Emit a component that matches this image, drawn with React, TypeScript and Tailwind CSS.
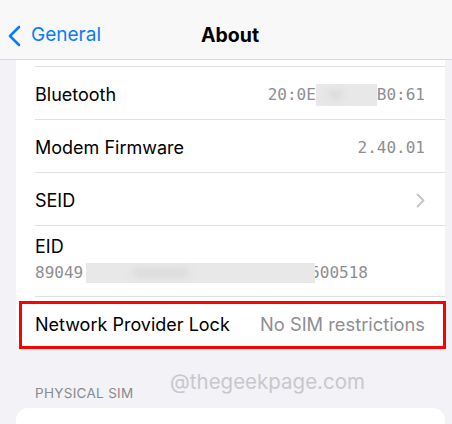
const sans = "font-['Inter','Liberation_Sans',sans-serif]";
const mono = "font-['DejaVu_Sans_Mono','Liberation_Mono',monospace]";

function Row({ label, children }: { label: string; children?: React.ReactNode }) {
  return (
    <div className="flex h-[52px] items-center justify-between pr-5 pt-[3px]">
      <span className="text-[18px] text-black">{label}</span>
      {children}
    </div>
  );
}

function Blur({ className }: { className: string }) {
  return (
    <span className={`relative inline-block overflow-hidden bg-[#e8e8e8] ${className}`}>
      <span className="absolute left-[20%] top-[25%] h-1/2 w-1/4 rounded-full bg-[#dcdcdc] blur-[3px]" />
    </span>
  );
}

export default function App() {
  return (
    <div className={`relative h-[424px] w-[452px] overflow-hidden bg-[#f2f2f7] ${sans}`}>
      {/* nav bar */}
      <div className="relative flex h-[60px] items-center border-b border-[#d9d9d9] bg-[#f8f8f8]">
        <div className="flex items-center gap-[10px] pl-2 pt-[12px]">
          <svg width="13" height="22" viewBox="0 0 13 22" fill="none">
            <path d="M11 2L2 11l9 9" stroke="#0a7aff" strokeWidth="2.6" strokeLinecap="round" strokeLinejoin="round" />
          </svg>
          <span className="text-[19px] text-[#0a7aff]">General</span>
        </div>
        <span className="absolute left-[8px] right-0 top-[21px] text-center text-[19.5px] font-bold text-black">
          About
        </span>
      </div>

      {/* main card */}
      <div className="ml-4 mr-[7px] rounded-b-xl bg-white pl-[19px]">
        <div className="h-[7px] border-b border-[#e0e0e0]" />
        <div className="border-b border-[#e0e0e0]">
          <Row label="Bluetooth">
            <span className={`flex items-center text-[16px] text-[#8e8e93] ${mono}`}>
              20:0E
              <Blur className="h-[22px] w-[61px]" />
              B0:61
            </span>
          </Row>
        </div>
        <div className="border-b border-[#e0e0e0]">
          <Row label="Modem Firmware">
            <span className={`text-[16px] text-[#8e8e93] ${mono}`}>2.40.01</span>
          </Row>
        </div>
        <div className="border-b border-[#e0e0e0]">
          <Row label="SEID">
            <svg width="9" height="15" viewBox="0 0 9 15" fill="none">
              <path d="M1.5 1.5l6 6-6 6" stroke="#c4c4c7" strokeWidth="1.8" strokeLinecap="round" strokeLinejoin="round" />
            </svg>
          </Row>
        </div>
        <div className="flex h-[71px] flex-col justify-center border-b border-[#e0e0e0] pb-1">
          <span className="text-[18px] leading-[24px] text-black">EID</span>
          <span className={`mt-[3px] flex items-center text-[16px] leading-[22px] text-[#8e8e93] ${mono}`}>
            89049
            <Blur className="ml-[3px] h-[20px] w-[229px]" />
            <span className="-ml-[5px]">500518</span>
          </span>
        </div>
        <div className="relative">
          <Row label="Network Provider Lock">
            <span className="text-[18.3px] text-[#8e8e93]">No SIM restrictions</span>
          </Row>
          <div className="absolute -left-4 -right-[1px] bottom-0 top-1 border-[3px] border-[#ff0000]" />
        </div>
      </div>

      <div className="relative mt-[34px] pl-[35px] text-[13.5px] tracking-[0.3px] text-[#8a8a8e]">
        PHYSICAL SIM
        <span className="absolute left-[170px] top-[-16px] text-[20.5px] tracking-normal text-[#c8c8cc]">
          @thegeekpage.com
        </span>
      </div>
      <div className="ml-4 mr-[7px] mt-[5px] h-[60px] rounded-xl bg-white" />
    </div>
  );
}
